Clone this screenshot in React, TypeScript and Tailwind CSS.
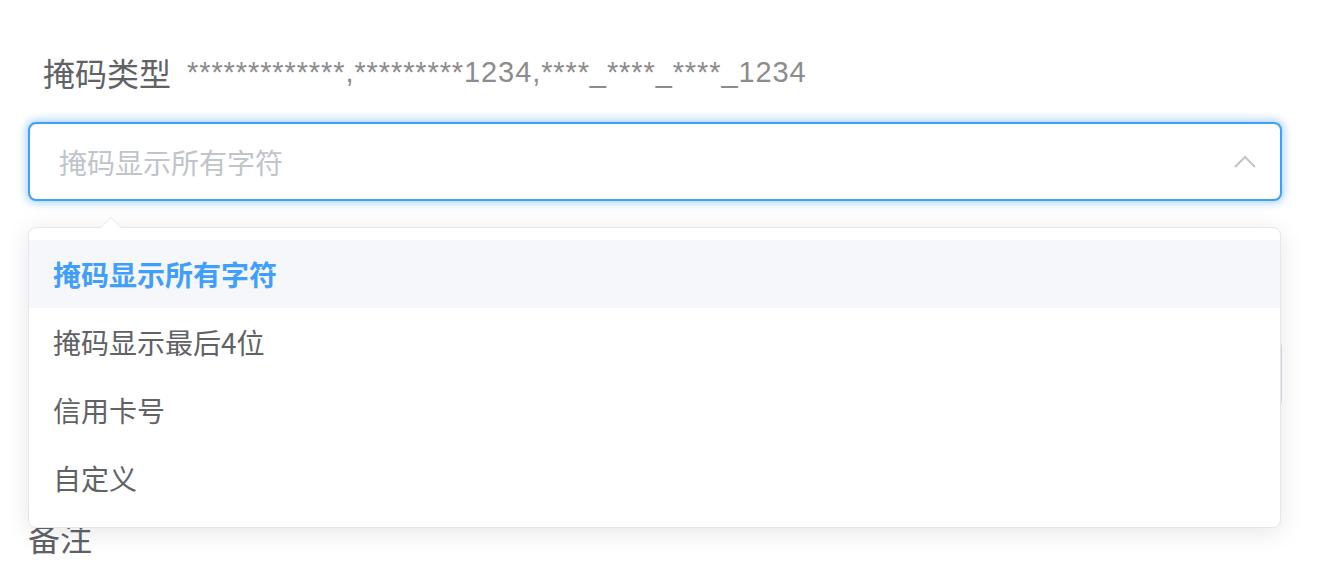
const items = ["掩码显示所有字符", "掩码显示最后4位", "信用卡号", "自定义"];

const cjk = "font-['Noto_Sans_CJK_SC','Noto_Sans',sans-serif]";

function ChevronUp() {
  return (
    <svg width="22" height="13" viewBox="0 0 22 13" fill="none">
      <path d="M1 12 L11 2 L21 12" stroke="#c0c4cc" strokeWidth="2" strokeLinejoin="miter" />
    </svg>
  );
}

export default function App() {
  const selected = 0;

  return (
    <div className={`w-[1318px] h-[566px] overflow-hidden bg-white px-[28px] ${cjk}`}>
      {/* 掩码类型 row */}
      <div className="flex items-center h-[40px] mt-[52px] pl-[15px]">
        <span className="text-[32px] leading-[40px] text-[#606266]">掩码类型</span>
        <span className="ml-[16px] text-[29px] leading-[40px] tracking-[0.9px] text-[#8c8c8c] font-['Liberation_Sans',sans-serif]">
          *************,*********1234,****_****_****_1234
        </span>
      </div>

      {/* select */}
      <div className="relative mt-[30px] w-[1254px]">
        <div className="flex items-center h-[79px] rounded-[8px] border-2 border-[#409eff] shadow-[0_0_8px_2px_rgba(64,158,255,0.45)] bg-white pl-[29px] pr-[24px]">
          <span className="flex-1 text-[28px] text-[#c0c4cc]">掩码显示所有字符</span>
          <ChevronUp />
        </div>

        {/* dropdown */}
        <div className="absolute left-0 top-[105px] z-10 w-[1253px]">
          <div className="absolute left-[72px] -top-[10px] w-0 h-0 border-x-[11px] border-x-transparent border-b-[11px] border-b-[#e4e7ed]" />
          <div className="absolute left-[73px] -top-[9px] w-0 h-0 border-x-[10px] border-x-transparent border-b-[10px] border-b-white z-10" />
          <div className="rounded-[8px] border border-[#e4e7ed] bg-white pt-[12px] pb-[15px] shadow-[0_4px_24px_rgba(0,0,0,0.1)]">
            {items.map((it, i) => (
              <div
                key={it}
                className={`flex items-center h-[68px] pl-[24px] text-[28px] ${
                  i === selected ? "bg-[#f5f7fa] text-[#409eff] font-bold" : "text-[#606266]"
                }`}
              >
                {it}
              </div>
            ))}
          </div>
        </div>
      </div>

      {/* next form item, mostly hidden under the dropdown */}
      <div className="mt-[138px] h-[70px] w-[1254px] rounded-[8px] border border-[#dcdfe6] bg-white" />

      {/* 备注 */}
      <div className="mt-[108px] text-[32px] leading-[40px] text-[#606266]">备注</div>
    </div>
  );
}
